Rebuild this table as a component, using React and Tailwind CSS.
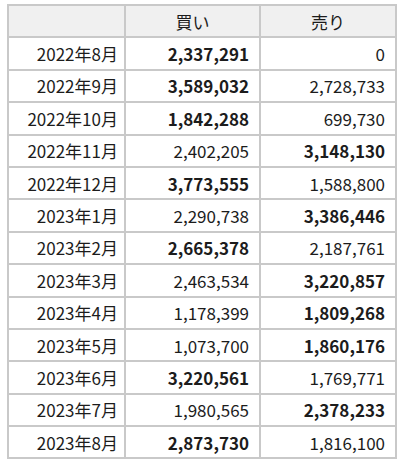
import React from "react";

const rows = [
    ["2022年8月", "2,337,291", "0", 1],
    ["2022年9月", "3,589,032", "2,728,733", 1],
    ["2022年10月", "1,842,288", "699,730", 1],
    ["2022年11月", "2,402,205", "3,148,130", 2],
    ["2022年12月", "3,773,555", "1,588,800", 1],
    ["2023年1月", "2,290,738", "3,386,446", 2],
    ["2023年2月", "2,665,378", "2,187,761", 1],
    ["2023年3月", "2,463,534", "3,220,857", 2],
    ["2023年4月", "1,178,399", "1,809,268", 2],
    ["2023年5月", "1,073,700", "1,860,176", 2],
    ["2023年6月", "3,220,561", "1,769,771", 1],
    ["2023年7月", "1,980,565", "2,378,233", 2],
    ["2023年8月", "2,873,730", "1,816,100", 1],
];

const cell = "border-2 border-[#c9c9c9] h-[32.4px] p-0 align-middle";

const App = () => {
    return (
        <div className="pt-[4px] pl-[7px] bg-white w-[400px] h-[461px] text-[17px] text-[#1c1c1c] font-['Noto_Sans_CJK_JP',sans-serif] leading-none">
            <table className="border-collapse w-[388px] table-fixed">
                <colgroup>
                    <col className="w-[117px]" />
                    <col className="w-[135px]" />
                    <col className="w-[136px]" />
                </colgroup>
                <thead>
                    <tr className="bg-[#f0f0f0]">
                        <th className={cell}></th>
                        <th className={cell + " font-normal text-center"}>買い</th>
                        <th className={cell + " font-normal text-center"}>売り</th>
                    </tr>
                </thead>
                <tbody>
                    {rows.map((r) => (
                        <tr key={r[0]}>
                            <td className={cell + " text-right pr-[6px]"}>{r[0]}</td>
                            <td className={cell + " text-right pr-[10px]" + (r[3] === 1 ? " font-bold" : "")}>{r[1]}</td>
                            <td className={cell + " text-right pr-[10px]" + (r[3] === 2 ? " font-bold" : "")}>{r[2]}</td>
                        </tr>
                    ))}
                </tbody>
            </table>
        </div>
    );
};

export default App;
